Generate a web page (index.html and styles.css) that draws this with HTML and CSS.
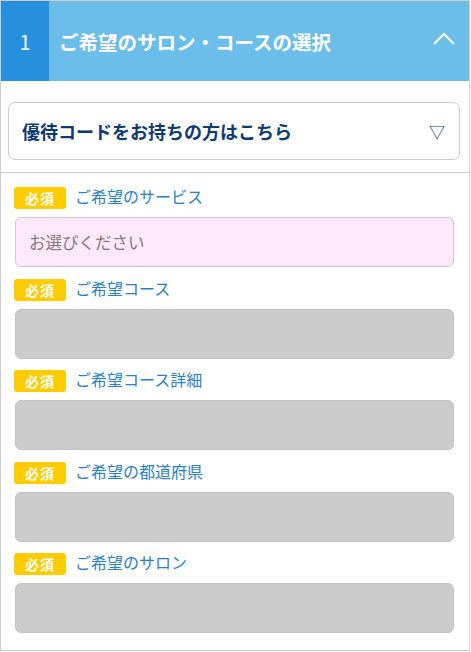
FILE: index.html
```html
<!DOCTYPE html>
<html lang="ja">
<head>
<meta charset="utf-8">
<link rel="stylesheet" href="styles.css">
</head>
<body>
<div class="panel">
  <div class="head">
    <div class="num">1</div>
    <div class="title">ご希望のサロン・コースの選択</div>
    <svg class="chev" width="24" height="14" viewBox="0 0 24 14"><polyline points="2,13 12,3 22,13" fill="none" stroke="#fff" stroke-width="2"/></svg>
  </div>
  <div class="coupon-wrap">
    <div class="coupon">
      <span class="coupon-text">優待コードをお持ちの方はこちら</span>
      <span class="tri">▽</span>
    </div>
  </div>
  <div class="fields">
    <div class="field">
      <div class="lab"><span class="req">必須</span><span class="name">ご希望のサービス</span></div>
      <div class="input pink">お選びください</div>
    </div>
    <div class="field">
      <div class="lab"><span class="req">必須</span><span class="name">ご希望コース</span></div>
      <div class="input gray"></div>
    </div>
    <div class="field">
      <div class="lab"><span class="req">必須</span><span class="name">ご希望コース詳細</span></div>
      <div class="input gray"></div>
    </div>
    <div class="field">
      <div class="lab"><span class="req">必須</span><span class="name">ご希望の都道府県</span></div>
      <div class="input gray"></div>
    </div>
    <div class="field">
      <div class="lab"><span class="req">必須</span><span class="name">ご希望のサロン</span></div>
      <div class="input gray"></div>
    </div>
  </div>
</div>
</body>
</html>
```
FILE: styles.css
```css
* { box-sizing: border-box; }
body {
  margin: 0;
  font-family: "Noto Sans CJK JP", "Noto Sans", sans-serif;
  background: #fff;
}
.panel {
  width: 470px;
  height: 651px;
  border: 1px solid #cccccc;
}
.head {
  display: flex;
  align-items: center;
  height: 80px;
  background: #6bbdea;
  color: #fff;
}
.num {
  width: 48px;
  height: 80px;
  background: #2790de;
  display: flex;
  align-items: center;
  justify-content: center;
  font-size: 20px;
}
.title {
  flex: 1;
  padding-left: 10px;
  font-size: 19.5px;
  font-weight: bold;
}
.chev {
  margin-right: 13px;
  margin-top: -6px;
}
.coupon-wrap {
  padding: 21px 9px 12px 7px;
  border-bottom: 1px solid #cccccc;
}
.coupon {
  height: 58px;
  border: 1px solid #cccccc;
  border-radius: 7px;
  display: flex;
  align-items: center;
  justify-content: space-between;
  padding: 0 14px 0 13px;
}
.coupon-text {
  font-size: 18px;
  font-weight: bold;
  color: #0e3a74;
}
.tri {
  font-size: 16px;
  color: #0e3a74;
}
.fields {
  padding: 14px 15px 0 13px;
}
.field {
  margin-bottom: 11.5px;
}
.lab {
  display: flex;
  align-items: center;
  height: 22px;
  margin-bottom: 8px;
}
.req {
  width: 52px;
  height: 22px;
  background: #ffcc00;
  border-radius: 3px;
  color: #fff;
  font-weight: bold;
  font-size: 14px;
  display: flex;
  align-items: center;
  justify-content: center;
  letter-spacing: 1px;
}
.name {
  margin-left: 9px;
  font-size: 16px;
  color: #2a80c8;
  line-height: 1;
  margin-top: -4px;
}
.input {
  margin-left: 1px;
  height: 50px;
  border: 1px solid #cccccc;
  border-radius: 6px;
  display: flex;
  align-items: center;
  padding-left: 13px;
  font-size: 16.5px;
  color: #8b7777;
}
.pink { background: #fde9fb; }
.gray { background: #cccccc; border-color: #c4c4c4; }
```
